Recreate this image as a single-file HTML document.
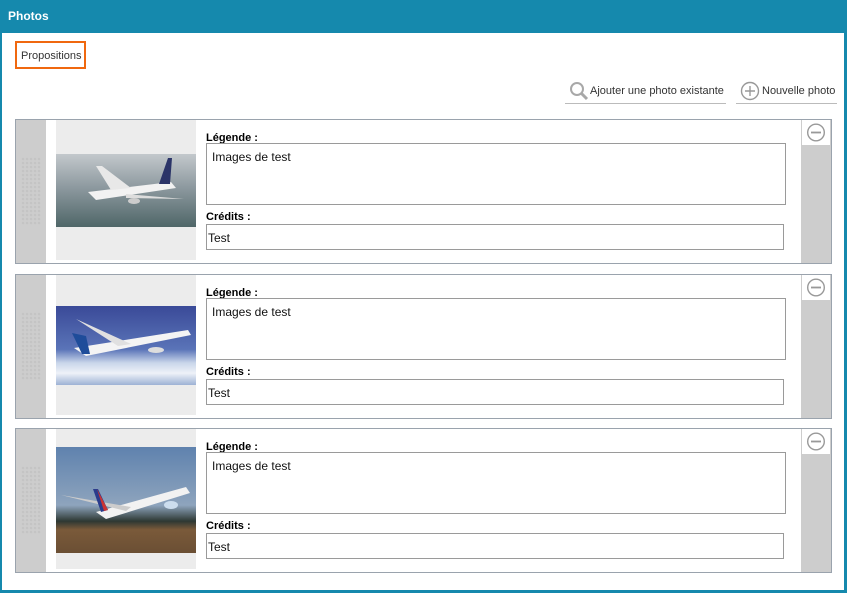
<!DOCTYPE html>
<html><head><meta charset="utf-8"><style>
*{margin:0;padding:0;box-sizing:border-box}
body{width:847px;height:593px;background:#fff;font-family:"Liberation Sans",Arial,sans-serif;position:relative;overflow:hidden}
.frame{position:absolute;left:0;top:0;width:847px;height:593px;border:solid #1589ad;border-width:0 3px 3px 2px}
.hdr{position:absolute;left:0;top:0;width:847px;height:33px;background:#1589ad;color:#fff;font-weight:bold;font-size:12px;padding:9px 0 0 8px}
.prop{position:absolute;left:15px;top:41px;width:71px;height:28px;border:2px solid #f0680f;font-size:11px;color:#333;padding:7px 0 0 4px}
.btn{position:absolute;top:80px;height:24px;border-bottom:1px solid #bbb;font-size:11px;color:#333}
.card{position:absolute;left:15px;width:817px;height:145px;border:1px solid #9aa3ad;background:#fff}
.grip{position:absolute;left:0;top:0;width:30px;height:143px;background:#cdcdcd}
.dots{position:absolute;left:5px;top:37px;width:20px;height:68px;background-image:radial-gradient(circle,#c4c4c4 1.2px,transparent 1.4px);background-size:4px 4px}
.imgbox{position:absolute;left:40px;top:0;width:140px;height:140px;background:#ececec}
.ph{position:absolute;left:0;width:140px}
.lab{position:absolute;left:190px;font-size:11px;font-weight:bold;color:#000}
.ta{position:absolute;left:190px;width:580px;border:1px solid #9a9a9a;font-size:12px;color:#111}
.rcol{position:absolute;left:785px;top:0;width:30px;height:143px;background:#cdcdcd}
.minus{position:absolute;left:1px;top:0;width:28px;height:25px;background:#fff}
</style></head><body>
<div class="hdr">Photos</div>
<div class="frame"></div>
<div class="prop">Propositions</div>
<div class="btn" style="left:565px;width:161px">
<svg width="20" height="20" style="position:absolute;left:4px;top:1px" viewBox="0 0 20 20"><circle cx="8" cy="8" r="6" fill="none" stroke="#a8a8a8" stroke-width="2"/><line x1="12.5" y1="12.5" x2="18" y2="18" stroke="#a8a8a8" stroke-width="3"/></svg>
<span style="position:absolute;left:25px;top:5px">Ajouter une photo existante</span></div>
<div class="btn" style="left:736px;width:101px">
<svg width="20" height="20" style="position:absolute;left:4px;top:1px" viewBox="0 0 20 20"><circle cx="10" cy="10" r="8.5" fill="none" stroke="#999" stroke-width="1.4"/><path d="M10 5v10M5 10h10" stroke="#999" stroke-width="1.4"/></svg>
<span style="position:absolute;left:26px;top:5px">Nouvelle photo</span></div>

<!-- card 1 -->
<div class="card" style="top:119px">
<div class="grip"><div class="dots"></div></div>
<div class="imgbox"><div class="ph" style="top:34px;height:73px;background:linear-gradient(180deg,#c3c8cc 0%,#8e9aa0 45%,#4f6668 100%)">
<svg width="140" height="73" viewBox="0 0 140 73"><path d="M32 38 L115 28 L120 34 L40 46 Z" fill="#f2f2f2"/><path d="M55 36 L40 12 L46 12 L75 34Z" fill="#e8e8e8"/><path d="M103 30 L112 4 L116 4 L114 30Z" fill="#2b3468"/><path d="M70 40 L128 45 L70 44Z" fill="#ddd"/><ellipse cx="78" cy="47" rx="6" ry="3" fill="#ccc"/></svg></div></div>
<div class="lab" style="top:12px">Légende :</div>
<div class="ta" style="top:23px;height:62px;padding:6px 0 0 5px">Images de test</div>
<div class="lab" style="top:91px">Crédits :</div>
<div class="ta" style="top:104px;height:26px;width:578px;padding:6px 0 0 1px">Test</div>
<div class="rcol"><div class="minus"><svg width="28" height="25" viewBox="0 0 28 25"><circle cx="14" cy="12.5" r="8.3" fill="none" stroke="#999" stroke-width="1.4"/><path d="M9 12.5h10" stroke="#999" stroke-width="1.8"/></svg></div></div>
</div>

<!-- card 2 -->
<div class="card" style="top:274px">
<div class="grip"><div class="dots"></div></div>
<div class="imgbox"><div class="ph" style="top:31px;height:79px;background:linear-gradient(180deg,#3a4a98 0%,#5a74b8 55%,#c9d6ea 72%,#eef2f8 85%,#9db2d4 100%)">
<svg width="140" height="79" viewBox="0 0 140 79"><path d="M18 42 L132 24 L135 29 L30 50 Z" fill="#f4f4f4"/><path d="M16 27 L26 48 L34 48 L30 30Z" fill="#1e4c9a"/><path d="M20 13 L75 38 L62 40Z" fill="#e0e0e0"/><ellipse cx="100" cy="44" rx="8" ry="3" fill="#ddd"/></svg></div></div>
<div class="lab" style="top:12px">Légende :</div>
<div class="ta" style="top:23px;height:62px;padding:6px 0 0 5px">Images de test</div>
<div class="lab" style="top:91px">Crédits :</div>
<div class="ta" style="top:104px;height:26px;width:578px;padding:6px 0 0 1px">Test</div>
<div class="rcol"><div class="minus"><svg width="28" height="25" viewBox="0 0 28 25"><circle cx="14" cy="12.5" r="8.3" fill="none" stroke="#999" stroke-width="1.4"/><path d="M9 12.5h10" stroke="#999" stroke-width="1.8"/></svg></div></div>
</div>

<!-- card 3 -->
<div class="card" style="top:428px">
<div class="grip"><div class="dots"></div></div>
<div class="imgbox"><div class="ph" style="top:18px;height:106px;background:linear-gradient(180deg,#5f82ae 0%,#8ea4bd 55%,#2d3833 70%,#7a5a3a 78%,#6b4f34 100%)">
<svg width="140" height="106" viewBox="0 0 140 106"><path d="M40 65 L130 40 L134 46 L50 72Z" fill="#f2f2f2"/><path d="M5 48 L75 60 L70 64Z" fill="#ccc"/><path d="M37 42 L45 65 L52 63 L42 42Z" fill="#2a3c8c"/><path d="M41 42 L48 64 L52 63Z" fill="#c33"/><ellipse cx="115" cy="58" rx="7" ry="4" fill="#cde"/></svg></div></div>
<div class="lab" style="top:12px">Légende :</div>
<div class="ta" style="top:23px;height:62px;padding:6px 0 0 5px">Images de test</div>
<div class="lab" style="top:91px">Crédits :</div>
<div class="ta" style="top:104px;height:26px;width:578px;padding:6px 0 0 1px">Test</div>
<div class="rcol"><div class="minus"><svg width="28" height="25" viewBox="0 0 28 25"><circle cx="14" cy="12.5" r="8.3" fill="none" stroke="#999" stroke-width="1.4"/><path d="M9 12.5h10" stroke="#999" stroke-width="1.8"/></svg></div></div>
</div>
</body></html>
